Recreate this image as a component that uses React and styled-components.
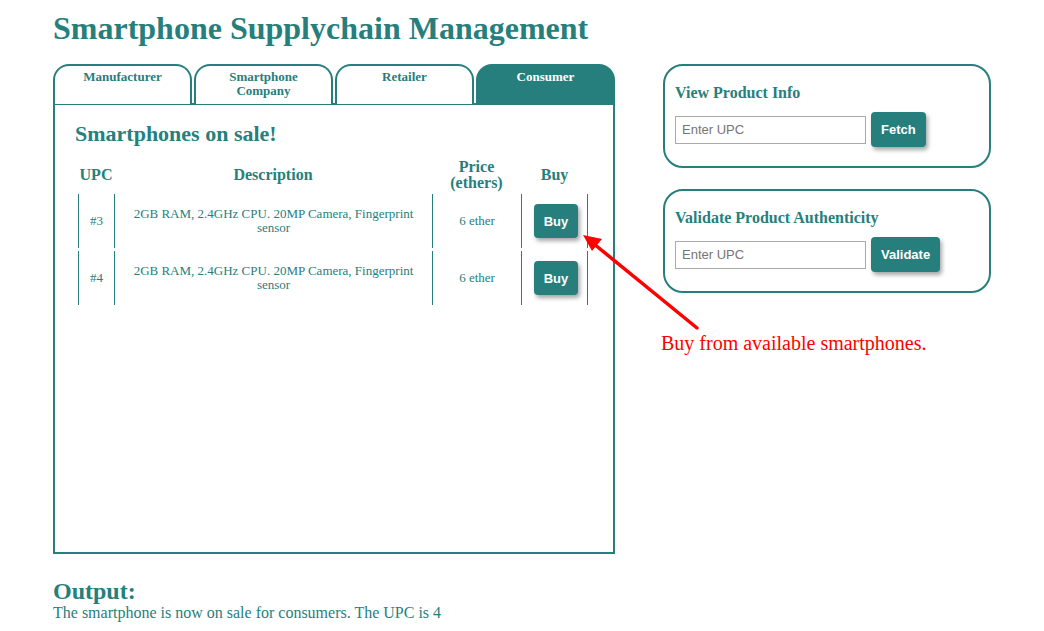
import React from "react";
import styled, { createGlobalStyle } from "styled-components";

const TEAL = "#267f7c";

const Global = createGlobalStyle`
  html, body { margin: 0; padding: 0; background: #fff; }
  body { font-family: "Liberation Serif", "Times New Roman", serif; color: ${TEAL}; }
`;

const Page = styled.div`
  position: relative;
  width: 1044px;
  height: 631px;
  box-sizing: border-box;
  padding: 8px 0 0 53px;
  overflow: hidden;
`;

const Title = styled.h1`
  margin: 0;
  font-size: 32px;
  line-height: 40px;
  font-weight: bold;
`;

const Main = styled.div`
  display: flex;
  gap: 48px;
  margin-top: 16px;
  align-items: flex-start;
`;

const LeftPanel = styled.div`
  width: 562px;
`;

const TabBar = styled.div`
  display: flex;
  gap: 2px;
`;

const Tab = styled.div`
  width: 139px;
  height: 40px;
  box-sizing: border-box;
  border: 2px solid ${TEAL};
  border-bottom: none;
  border-radius: 16px 16px 0 0;
  background: ${(p) => (p.$active ? TEAL : "#fff")};
  color: ${(p) => (p.$active ? "#fff" : TEAL)};
  font-size: 13px;
  font-weight: bold;
  line-height: 14px;
  text-align: center;
  padding: 4px 20px 0;
`;

const TabContent = styled.div`
  height: 451px;
  box-sizing: border-box;
  border: 2px solid ${TEAL};
  margin-top: -1px;
  padding: 15px 20px 0 20px;
`;

const SubTitle = styled.h2`
  margin: 0 0 8px;
  font-size: 22px;
  line-height: 28px;
  font-weight: bold;
`;

const Table = styled.table`
  margin-left: 3px;
  border-collapse: separate;
  border-spacing: 0 3px;
  table-layout: fixed;
  width: 510px;
`;

const Th = styled.th`
  font-size: 16px;
  line-height: 16px;
  font-weight: bold;
  text-align: center;
  vertical-align: middle;
  padding: 0;
`;

const Td = styled.td`
  height: 54px;
  box-sizing: border-box;
  border-left: 1px solid ${TEAL};
  border-right: ${(p) => (p.$last ? `1px solid ${TEAL}` : "none")};
  font-size: 13px;
  line-height: 14px;
  text-align: center;
  vertical-align: middle;
  padding: ${(p) => (p.$tight ? "0" : "0 14px")};
`;

const Button = styled.button`
  background: ${TEAL};
  color: #fff;
  border: none;
  border-radius: 4px;
  font-family: "Liberation Sans", Arial, sans-serif;
  font-size: 13px;
  font-weight: bold;
  height: ${(p) => p.$h || 34}px;
  padding: 0 10px;
  box-shadow: 2px 3px 4px rgba(0, 0, 0, 0.35);
  cursor: pointer;
`;

const BuyCell = styled(Td)`
  padding: 0 0 0 3px;
`;

const RightColumn = styled.div`
  display: flex;
  flex-direction: column;
  gap: 21px;
`;

const Card = styled.div`
  width: 328px;
  height: 104px;
  box-sizing: border-box;
  border: 2px solid ${TEAL};
  border-radius: 20px;
  padding: 17px 10px 0;
`;

const CardTitle = styled.h3`
  margin: 0 0 9px;
  font-size: 16px;
  line-height: 20px;
  font-weight: bold;
`;

const Row = styled.div`
  display: flex;
  align-items: center;
  gap: 5px;
`;

const Input = styled.input`
  width: 191px;
  height: 28px;
  box-sizing: border-box;
  border: 1px solid #aaa;
  padding: 0 6px;
  font-family: "Liberation Sans", Arial, sans-serif;
  font-size: 13px;
  &::placeholder { color: #757575; }
`;

const OutputTitle = styled.h3`
  margin: 24px 0 0;
  font-size: 24px;
  line-height: 26px;
  font-weight: bold;
`;

const OutputText = styled.div`
  font-size: 16px;
  line-height: 18px;
`;

const ArrowLayer = styled.svg`
  position: absolute;
  left: 0;
  top: 0;
  pointer-events: none;
`;

const Note = styled.div`
  position: absolute;
  left: 661px;
  top: 331px;
  color: #ff0000;
  font-size: 20px;
  line-height: 24px;
  white-space: nowrap;
`;

const rows = [
  { upc: "#3", desc: "2GB RAM, 2.4GHz CPU. 20MP Camera, Fingerprint sensor", price: "6 ether" },
  { upc: "#4", desc: "2GB RAM, 2.4GHz CPU. 20MP Camera, Fingerprint sensor", price: "6 ether" },
];

export default function App() {
  return (
    <>
      <Global />
      <Page>
        <Title>Smartphone Supplychain Management</Title>
        <Main>
          <LeftPanel>
            <TabBar>
              <Tab>Manufacturer</Tab>
              <Tab>Smartphone Company</Tab>
              <Tab>Retailer</Tab>
              <Tab $active>Consumer</Tab>
            </TabBar>
            <TabContent>
              <SubTitle>Smartphones on sale!</SubTitle>
              <Table>
                <colgroup>
                  <col style={{ width: 36 }} />
                  <col style={{ width: 318 }} />
                  <col style={{ width: 89 }} />
                  <col style={{ width: 67 }} />
                </colgroup>
                <thead>
                  <tr>
                    <Th>UPC</Th>
                    <Th>Description</Th>
                    <Th>Price (ethers)</Th>
                    <Th>Buy</Th>
                  </tr>
                </thead>
                <tbody>
                  {rows.map((r) => (
                    <tr key={r.upc}>
                      <Td $tight>{r.upc}</Td>
                      <Td>{r.desc}</Td>
                      <Td $tight>{r.price}</Td>
                      <BuyCell $last>
                        <Button>Buy</Button>
                      </BuyCell>
                    </tr>
                  ))}
                </tbody>
              </Table>
            </TabContent>
          </LeftPanel>
          <RightColumn>
            <Card>
              <CardTitle>View Product Info</CardTitle>
              <Row>
                <Input placeholder="Enter UPC" />
                <Button $h={35}>Fetch</Button>
              </Row>
            </Card>
            <Card>
              <CardTitle>Validate Product Authenticity</CardTitle>
              <Row>
                <Input placeholder="Enter UPC" />
                <Button $h={35}>Validate</Button>
              </Row>
            </Card>
          </RightColumn>
        </Main>
        <OutputTitle>Output:</OutputTitle>
        <OutputText>The smartphone is now on sale for consumers. The UPC is 4</OutputText>

        <ArrowLayer width="1044" height="631" viewBox="0 0 1044 631">
          <line x1="697" y1="328" x2="594" y2="244" stroke="#ff0000" strokeWidth="3.5" strokeLinecap="round" />
          <polygon points="583,235 602,239 592,251" fill="#ff0000" />
        </ArrowLayer>
        <Note>Buy from available smartphones.</Note>
      </Page>
    </>
  );
}
